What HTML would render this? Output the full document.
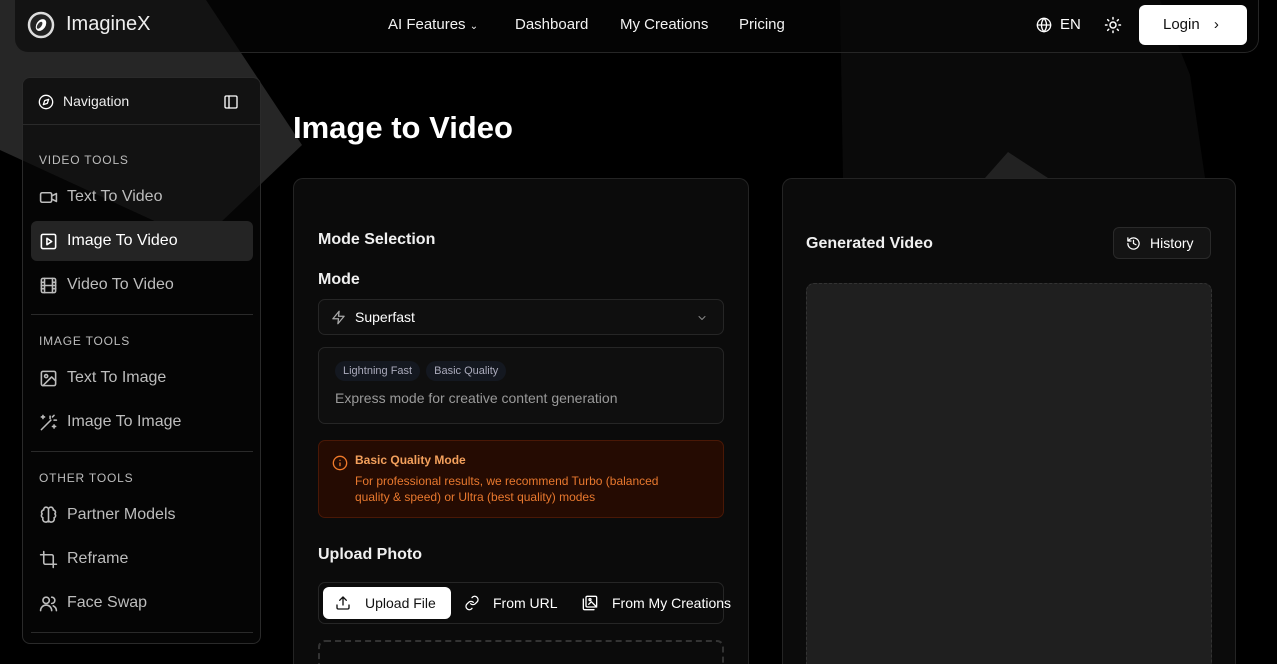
<!DOCTYPE html>
<html><head><meta charset="utf-8"><style>
*{box-sizing:border-box;margin:0;padding:0}
html,body{width:1277px;height:664px;overflow:hidden}
body{background:#000;font-family:"Liberation Sans",sans-serif;color:#fff;position:relative}
.abs{position:absolute}
svg.i{fill:none;stroke:currentColor;stroke-width:2;stroke-linecap:round;stroke-linejoin:round}
.hdr{left:14px;top:-1px;width:1245px;height:54px;border:1px solid #262626;border-top:none;border-radius:0 0 14px 14px;background:rgba(6,6,6,0.6)}
.nav a{position:absolute;top:16px;font-size:15px;color:#f2f2f2}
.side{left:22px;top:77px;width:239px;height:567px;border:1px solid #2a2a2a;border-radius:8px;background:rgba(8,8,8,0.65)}
.sec{position:absolute;left:16px;font-size:12px;letter-spacing:0.8px;color:#bdbdbd}
.it{position:absolute;left:8px;width:222px;height:40px;border-radius:6px;font-size:16px;color:#bdbdbd;display:flex;align-items:center;padding-left:8px}
.it svg{width:19px;height:19px;margin-right:9px}
.sep{position:absolute;left:8px;width:222px;height:1px;background:#2a2a2a}
.card{background:#0b0b0b;border:1px solid #242424;border-bottom:none;border-radius:10px 10px 0 0;overflow:hidden}
.lbl{position:absolute;font-size:16px;font-weight:bold;color:#f0f0f0}
.box{position:absolute;left:24px;width:406px;border:1px solid #262626;border-radius:7px;background:#0f0f0f}
.tag{display:inline-block;font-size:11px;color:#aab;background:#141820;border-radius:10px;padding:4px 8px;margin-right:6px}
</style></head><body>
<svg class="abs" style="left:0;top:0" width="1277" height="664">
<polygon points="0,0 206,0 302,145 200,242 0,150" fill="#262626"/>
<polygon points="840,0 1160,0 1190,75 1205,178 843,178" fill="#0a0a0a"/>
<polygon points="985,178 1008,152 1048,178" fill="#222"/>
</svg>
<div class="abs hdr"></div>
<svg class="abs" style="left:27px;top:11px" width="28" height="28" viewBox="0 0 28 28"><circle cx="14" cy="14" r="12" fill="#222" stroke="#ddd" stroke-width="2.5"/><ellipse cx="14" cy="14" rx="4.5" ry="6.5" transform="rotate(35 14 14)" fill="#fff"/><ellipse cx="13" cy="15" rx="2" ry="4" transform="rotate(35 14 14)" fill="#333"/></svg>
<div class="abs" style="left:66px;top:13px;font-size:20px;color:#eee">ImagineX</div>
<div class="nav">
<a style="left:388px">AI Features <span style="font-size:10px">⌄</span></a>
<a style="left:515px">Dashboard</a><a style="left:620px">My Creations</a><a style="left:739px">Pricing</a></div>
<svg class="abs i" style="left:1036px;top:17px" width="16" height="16" viewBox="0 0 24 24"><circle cx="12" cy="12" r="10"/><path d="M2 12h20M12 2a15 15 0 0 1 0 20M12 2a15 15 0 0 0 0 20"/></svg>
<div class="abs" style="left:1060px;top:16px;font-size:15px">EN</div>
<svg class="abs i" style="left:1104px;top:16px" width="18" height="18" viewBox="0 0 24 24"><circle cx="12" cy="12" r="4"/><path d="M12 2v2M12 20v2M4.9 4.9l1.4 1.4M17.7 17.7l1.4 1.4M2 12h2M20 12h2M4.9 19.1l1.4-1.4M17.7 6.3l1.4-1.4"/></svg>
<div class="abs" style="left:1139px;top:5px;width:108px;height:40px;background:#fff;border-radius:6px;color:#111;font-size:15px;padding:11px 0 0 24px">Login <span style="margin-left:10px">›</span></div>

<div class="abs side">
<svg class="abs i" style="left:15px;top:16px" width="16" height="16" viewBox="0 0 24 24"><circle cx="12" cy="12" r="10"/><path d="M16 8l-2 6-6 2 2-6z"/></svg>
<div class="abs" style="left:40px;top:15px;font-size:14px;color:#eee">Navigation</div>
<svg class="abs i" style="left:200px;top:16px" width="16" height="16" viewBox="0 0 24 24"><rect x="3" y="3" width="18" height="18" rx="2"/><path d="M9 3v18"/></svg>
<div class="abs" style="left:0;top:46px;width:237px;height:1px;background:#2a2a2a"></div>
<div class="sec" style="top:75px">VIDEO TOOLS</div>
<div class="it" style="top:99px"><svg class="i" viewBox="0 0 24 24"><rect x="2" y="6" width="14" height="12" rx="2"/><path d="M16 10l6-3v10l-6-3"/></svg>Text To Video</div>
<div class="it" style="top:143px;background:#242424;color:#fff"><svg class="i" viewBox="0 0 24 24"><rect x="3" y="3" width="18" height="18" rx="2"/><path d="M10 8l6 4-6 4z"/></svg>Image To Video</div>
<div class="it" style="top:187px"><svg class="i" viewBox="0 0 24 24"><rect x="3" y="3" width="18" height="18" rx="2"/><path d="M7 3v18M17 3v18M3 8h4M3 12h18M3 16h4M17 8h4M17 16h4"/></svg>Video To Video</div>
<div class="sep" style="top:236px"></div>
<div class="sec" style="top:256px">IMAGE TOOLS</div>
<div class="it" style="top:280px"><svg class="i" viewBox="0 0 24 24"><rect x="3" y="3" width="18" height="18" rx="2"/><circle cx="9" cy="9" r="2"/><path d="M21 15l-5-5L5 21"/></svg>Text To Image</div>
<div class="it" style="top:324px"><svg class="i" viewBox="0 0 24 24"><path d="M3 21L15 9M14 4v3M19 9h3M17 5l2-2M5 3v4M3 5h4M19 15v4M17 17h4"/></svg>Image To Image</div>
<div class="sep" style="top:373px"></div>
<div class="sec" style="top:393px">OTHER TOOLS</div>
<div class="it" style="top:417px"><svg class="i" viewBox="0 0 24 24"><path d="M12 4a3 3 0 0 0-6 1 3 3 0 0 0-2 5 3 3 0 0 0 1 5 3 3 0 0 0 7 3zM12 4a3 3 0 0 1 6 1 3 3 0 0 1 2 5 3 3 0 0 1-1 5 3 3 0 0 1-7 3zM12 4v16"/></svg>Partner Models</div>
<div class="it" style="top:461px"><svg class="i" viewBox="0 0 24 24"><path d="M6 2v14a2 2 0 0 0 2 2h14M18 22V8a2 2 0 0 0-2-2H2"/></svg>Reframe</div>
<div class="it" style="top:505px"><svg class="i" viewBox="0 0 24 24"><circle cx="9" cy="8" r="4"/><path d="M2 21a7 7 0 0 1 14 0M16 4a4 4 0 0 1 0 8M22 21a7 7 0 0 0-4-6"/></svg>Face Swap</div>
<div class="sep" style="top:554px"></div>
</div>

<div class="abs" style="left:293px;top:110px;font-size:31px;font-weight:bold">Image to Video</div>

<div class="abs card" style="left:293px;top:178px;width:456px;height:486px">
<div class="lbl" style="left:24px;top:52px">Mode Selection</div>
<div class="lbl" style="left:24px;top:92px">Mode</div>
<div class="box" style="top:120px;height:36px">
<svg class="abs i" style="left:12px;top:10px;color:#aaa" width="15" height="15" viewBox="0 0 24 24"><path d="M13 2L3 14h9l-1 8 10-12h-9z"/></svg>
<div class="abs" style="left:36px;top:9px;font-size:14px">Superfast</div>
<svg class="abs i" style="left:377px;top:12px;color:#888" width="12" height="12" viewBox="0 0 24 24"><path d="M6 9l6 6 6-6"/></svg></div>
<div class="box" style="top:168px;height:77px;padding:13px 0 0 16px"><span class="tag">Lightning Fast</span><span class="tag">Basic Quality</span>
<div style="font-size:14px;color:#9a9a9a;margin-top:9px">Express mode for creative content generation</div></div>
<div class="box" style="top:261px;height:78px;background:#250b02;border-color:#4a1806">
<svg class="abs i" style="left:13px;top:14px;color:#f07a2a" width="16" height="16" viewBox="0 0 24 24"><circle cx="12" cy="12" r="10"/><path d="M12 16v-4M12 8h0"/></svg>
<div class="abs" style="left:36px;top:12px;font-size:12px;font-weight:bold;color:#f3a05c">Basic Quality Mode</div>
<div class="abs" style="left:36px;top:32px;font-size:12px;line-height:16px;color:#e8782e;width:330px">For professional results, we recommend Turbo (balanced quality &amp; speed) or Ultra (best quality) modes</div></div>
<div class="lbl" style="left:24px;top:367px">Upload Photo</div>
<div class="box" style="top:403px;height:42px;background:#0b0b0b">
<div class="abs" style="left:4px;top:4px;width:128px;height:32px;background:#fff;border-radius:6px;color:#111;font-size:14px;padding:8px 0 0 42px">Upload File</div>
<svg class="abs i" style="left:16px;top:12px;color:#111" width="16" height="16" viewBox="0 0 24 24"><path d="M21 15v4a2 2 0 0 1-2 2H5a2 2 0 0 1-2-2v-4M17 8l-5-5-5 5M12 3v12"/></svg>
<svg class="abs i" style="left:145px;top:12px" width="16" height="16" viewBox="0 0 24 24"><path d="M10 13a5 5 0 0 0 7 0l3-3a5 5 0 0 0-7-7l-1 1M14 11a5 5 0 0 0-7 0l-3 3a5 5 0 0 0 7 7l1-1"/></svg>
<div class="abs" style="left:174px;top:12px;font-size:14px">From URL</div>
<svg class="abs i" style="left:263px;top:12px" width="16" height="16" viewBox="0 0 24 24"><rect x="6" y="2" width="16" height="16" rx="2"/><path d="M2 6v14a2 2 0 0 0 2 2h14M10 14l4-4 8 8"/><circle cx="12" cy="7" r="1.5"/></svg>
<div class="abs" style="left:293px;top:12px;font-size:14px;white-space:nowrap">From My Creations</div></div>
<div class="box" style="top:461px;height:40px;border:2px dashed #333;background:transparent"></div>
</div>

<div class="abs card" style="left:782px;top:178px;width:454px;height:486px">
<div class="lbl" style="left:23px;top:56px">Generated Video</div>
<div class="abs" style="left:330px;top:48px;width:98px;height:32px;border:1px solid #2a2a2a;border-radius:6px;background:#141414;font-size:14px;padding:7px 0 0 36px">History</div>
<svg class="abs i" style="left:343px;top:57px" width="15" height="15" viewBox="0 0 24 24"><path d="M3 12a9 9 0 1 0 3-6.7L3 8M3 3v5h5M12 7v5l4 2"/></svg>
<div class="abs" style="left:23px;top:104px;width:406px;height:400px;background:#1f1f1f;border:1px dashed #333;border-radius:8px"></div>
</div>
</body></html>
